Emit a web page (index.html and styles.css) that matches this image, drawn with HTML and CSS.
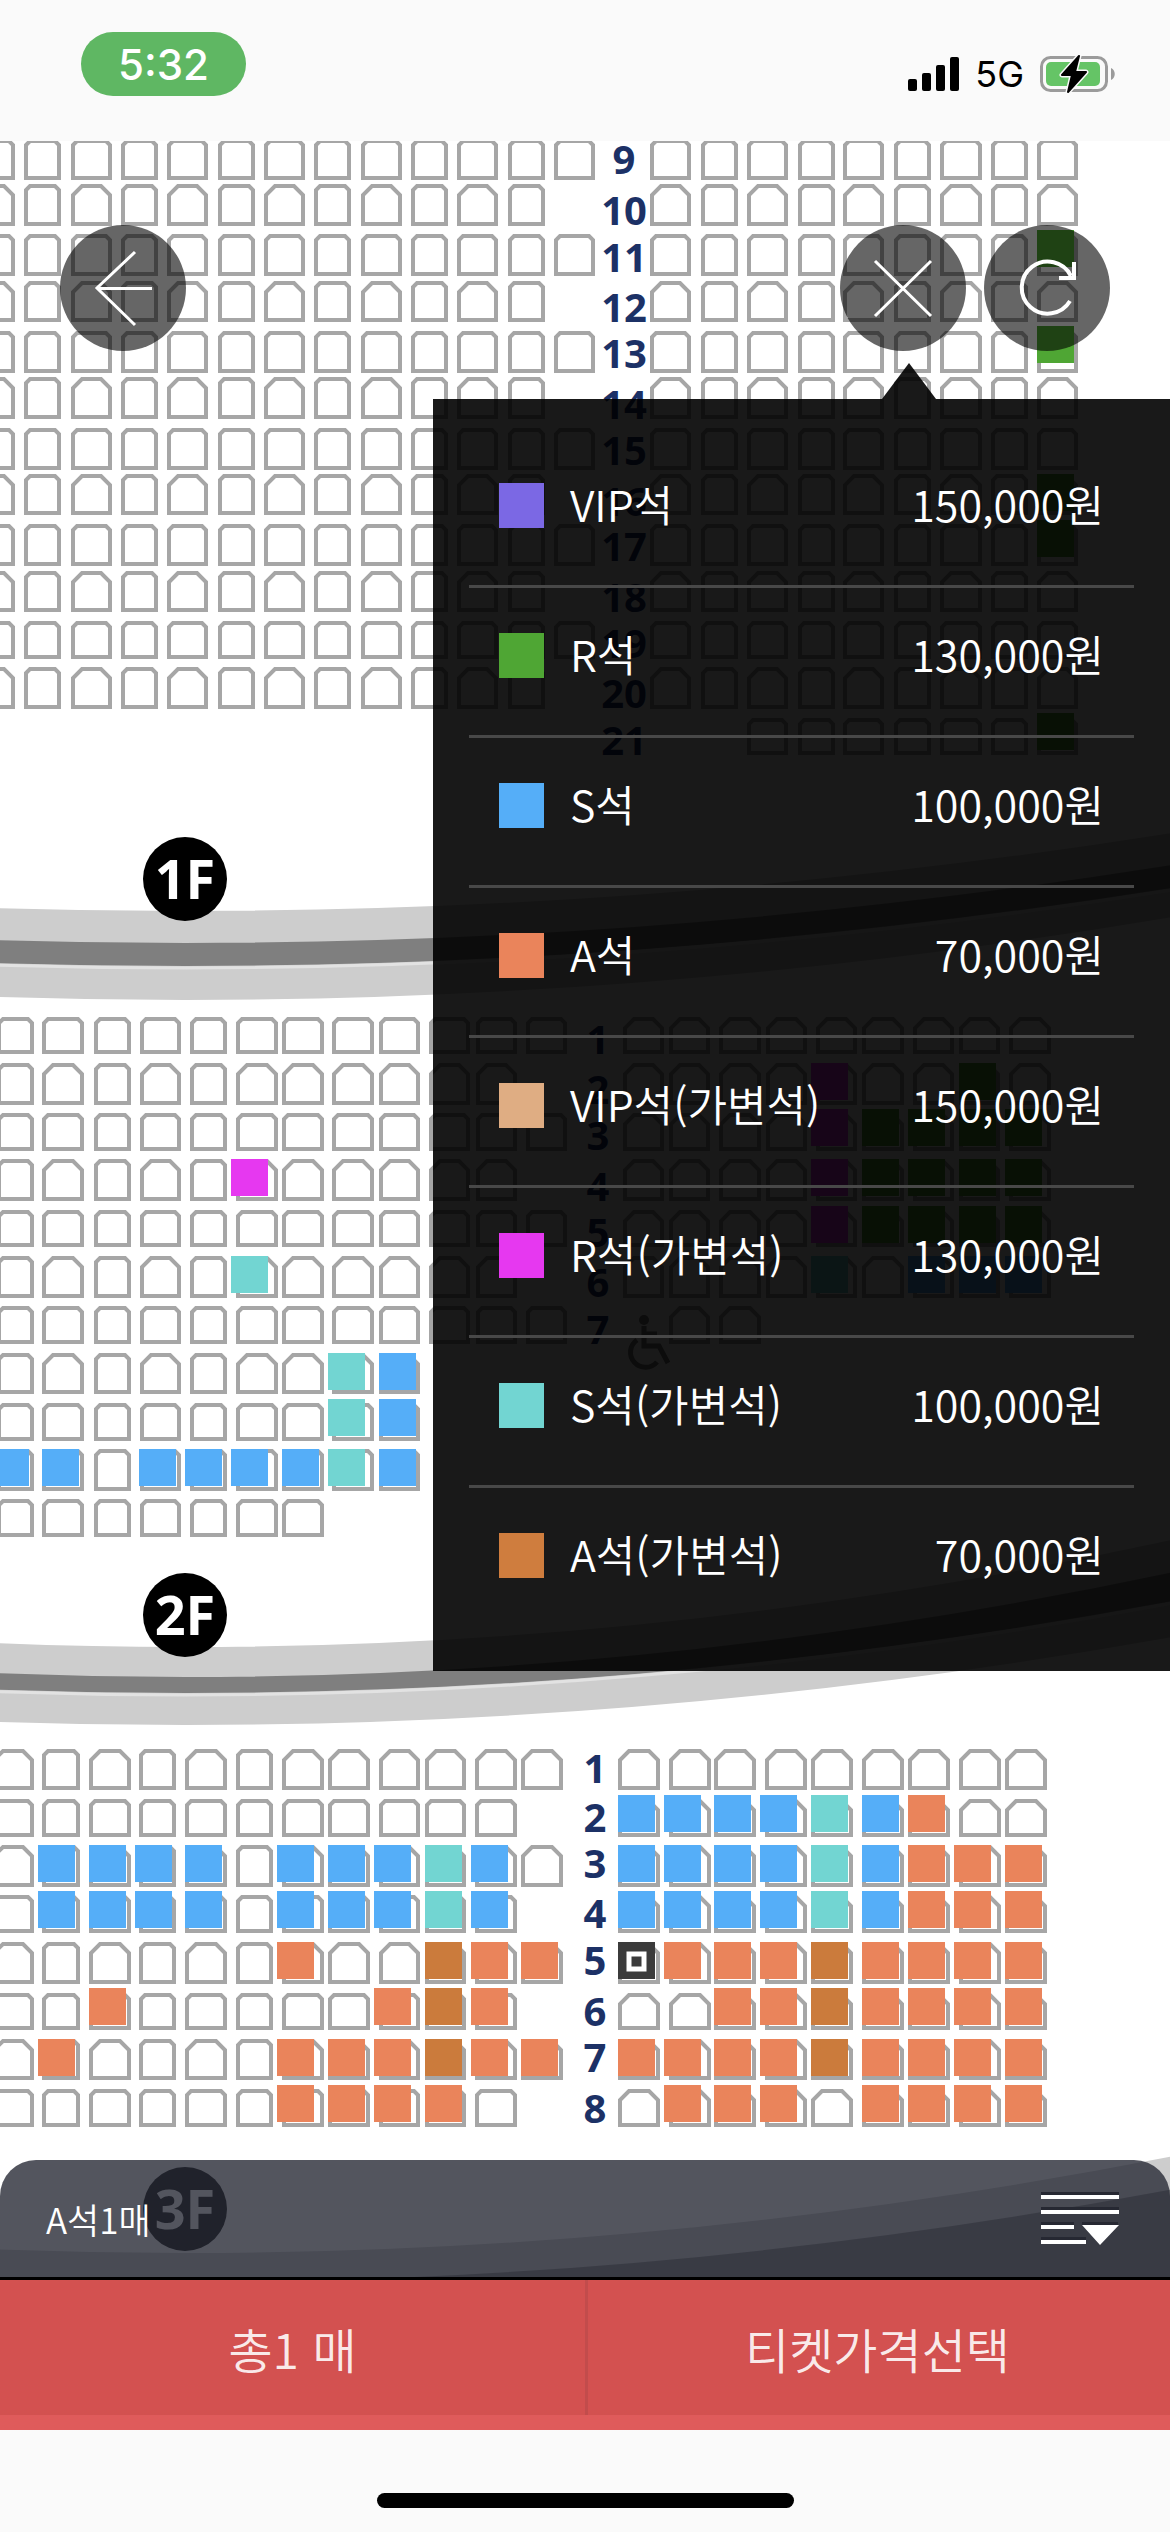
FILE: index.html
```html
<!DOCTYPE html>
<html lang="ko">
<head>
<meta charset="utf-8">
<meta name="viewport" content="width=device-width, initial-scale=1">
<title>좌석 선택</title>
<link rel="stylesheet" href="styles.css">
</head>
<body>
<header class="status">
  <span class="status-time">5:32</span>
  <div class="status-right">
    <svg class="signal" viewBox="0 0 51 34" aria-hidden="true">
      <rect x="0" y="22" width="9" height="12" rx="2"/>
      <rect x="14" y="16" width="9" height="18" rx="2"/>
      <rect x="28" y="8" width="9" height="26" rx="2"/>
      <rect x="42" y="0" width="9" height="34" rx="2"/>
    </svg>
    <span class="network">5G</span>
    <svg class="battery" viewBox="0 0 76 38" aria-hidden="true">
      <rect x="1.5" y="2.5" width="65" height="33" rx="9" fill="none" stroke="#9b9b9b" stroke-width="3"/>
      <rect x="6" y="7" width="54" height="24" rx="5" fill="#65c466"/>
      <path d="M71 13c5 2 5 10 0 12z" fill="#9b9b9b"/>
      <path d="M39 1 22 20h10l-4 17 18-20H35z" fill="#000" stroke="#fafafa" stroke-width="5" stroke-linejoin="round"/>
      <path d="M39 1 22 20h10l-4 17 18-20H35z" fill="#000" stroke="#000" stroke-width="2" stroke-linejoin="round"/>
    </svg>
  </div>
</header>

<main class="map">
  <svg class="map-canvas" viewBox="0 141 1170 2136" role="img" aria-label="좌석 배치도">
    <g class="band">
      <path d="M-915 814Q185 1008 1285 814V897Q185 1103-915 897z"/>
      <path class="band-dark" d="M-915 846Q185 1040 1285 846V869Q185 1063-915 869z"/>
      <path class="band-line" d="M-915 871Q185 1065 1285 871"/>
      <path d="M-915 1514Q185 1780 1285 1514V1616Q185 1834-915 1616z"/>
      <path class="band-dark" d="M-915 1547Q185 1807 1285 1547V1579Q185 1807-915 1579z"/>
      <path class="band-line" d="M-915 1581Q185 1809 1285 1581"/>
      <path d="M-915 2133Q185 2373 1285 2133V2400H-915z"/>
      <path class="band-dark" d="M-915 2167Q185 2397 1285 2167V2400H-915z"/>
    </g>
    <g id="seats"></g>
    <g id="row-numbers" class="row-number"></g>
    <g class="floor">
      <circle cx="185" cy="879" r="42"/><text x="185" y="899">1F</text>
      <circle cx="185" cy="1615" r="42"/><text x="185" y="1635">2F</text>
      <circle cx="185" cy="2209" r="42"/><text x="185" y="2229">3F</text>
    </g>
    <g class="wheelchair">
      <circle cx="644" cy="1320" r="5"/>
      <path d="M644 1326v20h15l9 17M645 1334h12M637 1340a15 15 0 1 0 20 22"/>
    </g>
  </svg>

  <nav class="tools">
    <button class="round back" type="button" aria-label="뒤로">
      <svg viewBox="0 0 126 126"><path class="thin" d="M75 27 37 63l38 37M37 63.5h55"/></svg>
    </button>
    <button class="round" type="button" aria-label="닫기">
      <svg viewBox="0 0 126 126"><path class="thin" d="M35 36 91 91M91 36 35 91"/></svg>
    </button>
    <button class="round" type="button" aria-label="새로고침">
      <svg viewBox="0 0 126 126"><path class="thick" d="M86 76A26 26 0 1 1 87 51M90 37v16H75"/></svg>
    </button>
  </nav>

  <section class="legend" aria-label="좌석 등급별 가격">
    <ul class="legend-list">
      <li class="grade"><span class="swatch vip"></span><span class="name">VIP석</span><span class="price">150,000원</span></li>
      <li class="grade"><span class="swatch r"></span><span class="name">R석</span><span class="price">130,000원</span></li>
      <li class="grade"><span class="swatch s"></span><span class="name">S석</span><span class="price">100,000원</span></li>
      <li class="grade"><span class="swatch a"></span><span class="name">A석</span><span class="price">70,000원</span></li>
      <li class="grade"><span class="swatch vip-flex"></span><span class="name">VIP석(가변석)</span><span class="price">150,000원</span></li>
      <li class="grade"><span class="swatch r-flex"></span><span class="name">R석(가변석)</span><span class="price">130,000원</span></li>
      <li class="grade"><span class="swatch s-flex"></span><span class="name">S석(가변석)</span><span class="price">100,000원</span></li>
      <li class="grade"><span class="swatch a-flex"></span><span class="name">A석(가변석)</span><span class="price">70,000원</span></li>
    </ul>
  </section>

  <section class="summary">
    <span class="summary-text">A석1매</span>
    <button class="list-button" type="button" aria-label="선택 좌석 목록">
      <svg viewBox="0 0 79 54">
        <path class="shade" d="M0 0h78v3H0zM0 15h78v3H0zM0 30h33v3H0zM0 45h45v3H0zM41 30h36v3H41z"/>
        <path d="M0 3h78v4H0zM0 18h78v4H0zM0 33h33v4H0zM0 48h45v4H0zM41 33h37L59 53z"/>
      </svg>
    </button>
  </section>
</main>

<footer class="actions">
  <button class="action" type="button">총1 매</button>
  <button class="action" type="button">티켓가격선택</button>
</footer>
<div class="home"><span class="home-bar"></span></div>
<script src="seats.js"></script>
</body>
</html>
```
FILE: styles.css
```css
* { box-sizing: border-box; }

body {
  margin: 0;
  min-height: 100vh;
  display: flex;
  flex-direction: column;
  background: #fafafa;
  font-family: "Noto Sans CJK KR", sans-serif;
}

button {
  border: 0;
  padding: 0;
  background: none;
  font: inherit;
  color: inherit;
  cursor: pointer;
}

svg { display: block; }

/* status bar */
.status {
  height: 141px;
  padding: 32px 54px 0 81px;
  display: flex;
  justify-content: space-between;
  align-items: flex-start;
  font-family: Inter, sans-serif;
}

.status-time {
  width: 165px;
  height: 64px;
  border-radius: 32px;
  background: #5fb763;
  color: #fff;
  font-size: 42px;
  font-weight: 500;
  line-height: 66px;
  text-align: center;
}

.status-right {
  display: flex;
  align-items: center;
  gap: 16px;
  padding-top: 23px;
}

.signal { width: 51px; height: 34px; }
.network { font-size: 36px; line-height: 38px; }
.battery { width: 76px; height: 38px; }

/* seat map */
.map {
  position: relative;
  flex: 1;
  overflow: hidden;
  background: #fff;
}

.map-canvas { width: 100%; height: auto; }

.band { fill: #cdcdcd; }
.band-dark { fill: #7f7f7f; }
.band-line { fill: none; stroke: #e2e2e2; stroke-width: 3; }

.seat { fill: #fff; stroke: #a6a6a6; stroke-width: 4; }
.seat-r { fill: #4fa634; }
.seat-s { fill: #55aef8; }
.seat-a { fill: #ea845b; }
.seat-r-flex { fill: #e638f0; }
.seat-s-flex { fill: #72d5d2; }
.seat-a-flex { fill: #cb7b3c; }
.seat-picked { fill: #3b3b3b; }
.seat-ring { fill: #3b3b3b; stroke: #fff; stroke-width: 5; }

.row-number {
  font: 700 40px "Open Sans", sans-serif;
  fill: #1c3166;
  text-anchor: middle;
}

.floor text {
  font: 700 54px "Open Sans", sans-serif;
  fill: #fff;
  text-anchor: middle;
}

.wheelchair path { fill: none; stroke: #777; stroke-width: 5; }
.wheelchair circle { fill: #777; }

/* floating buttons */
.tools {
  position: absolute;
  top: 84px;
  left: 60px;
  right: 60px;
  display: flex;
  gap: 18px;
}

.round {
  width: 126px;
  height: 126px;
  border-radius: 50%;
  background: rgba(0, 0, 0, .6);
}

.back { margin-right: auto; }
.round path { fill: none; stroke: #fff; }
.thin { stroke-width: 3px; }
.thick { stroke-width: 4px; }

/* price legend */
.legend {
  position: absolute;
  top: 258px;
  right: 0;
  width: 63%;
  padding: 39px 36px 33px;
  background: rgba(0, 0, 0, .9);
}

.legend::before {
  content: "";
  position: absolute;
  right: 234px;
  bottom: 100%;
  border: 27px solid transparent;
  border-top: 0;
  border-bottom: 36px solid rgba(0, 0, 0, .9);
}

.legend-list { margin: 0; padding: 0; list-style: none; }

.grade {
  height: 150px;
  padding: 0 30px 12px;
  display: flex;
  align-items: center;
  border-bottom: 3px solid #484848;
  color: #fff;
  font-size: 43px;
  font-weight: 350;
  line-height: 60px;
}

.grade:last-child { border-color: transparent; }
.swatch { width: 45px; height: 45px; margin-right: 26px; }
.name, .price { padding-bottom: 6px; }
.price { margin-left: auto; }
.vip { background: #7b68e4; }
.r { background: #4fa634; }
.s { background: #55aef8; }
.a { background: #ea845b; }
.vip-flex { background: #dfad83; }
.r-flex { background: #e638f0; }
.s-flex { background: #72d5d2; }
.a-flex { background: #cf7d3e; }

/* selection summary */
.summary {
  position: absolute;
  left: 0;
  right: 0;
  bottom: 0;
  height: 117px;
  padding: 0 50px 0 46px;
  display: flex;
  align-items: center;
  justify-content: space-between;
  border-radius: 36px 36px 0 0;
  background: rgba(40, 43, 54, .8);
  color: #fff;
  font-size: 35px;
  font-weight: 350;
}

.list-button svg { width: 79px; height: 54px; fill: #fff; }
.list-button .shade { fill: #262832; }

/* bottom actions */
.actions {
  display: grid;
  grid-template-columns: 1fr 1fr;
  border-top: 3px solid #000;
}

.action {
  height: 150px;
  border-bottom: 15px solid #df5b5b;
  background: #d35150;
  color: rgba(255, 255, 255, .9);
  font-size: 48px;
  font-weight: 350;
}

.action + .action { box-shadow: inset 3px 0 #c24c4c; }

.home {
  height: 102px;
  padding-top: 63px;
}

.home-bar {
  display: block;
  width: 417px;
  height: 15px;
  margin: 0 auto;
  border-radius: 8px;
  background: #000;
}
```
FILE: seats.js
```js
const NS = "http://www.w3.org/2000/svg";
const seats = document.getElementById("seats");
const numbers = document.getElementById("row-numbers");

const GRADES = { R: "seat-r", B: "seat-s", O: "seat-a", M: "seat-r-flex", T: "seat-s-flex", W: "seat-a-flex", X: "seat-picked" };

// Columns are [left, right, left edge of the coloured tile].
const hallLeft = [[-26,15],[24,61],[71,112],[121,158],[167,208],[218,255],[264,305],[314,351],[361,402],[411,448],[457,498],[508,545],[554,595]];
const hallRight = [[650,691],[701,738],[747,788],[798,835],[843,884],[894,931],[940,982],[991,1028],[1037,1078,1037]];
const midLeft = [[-3,34,-8],[42,84,42],[94,131,90],[140,181,139],[190,227,185],[236,278,231],[282,324,282],[332,374,328],[379,420,379],[429,470],[476,517],[526,567]];
const midRight = [[623,664],[669,710],[719,761],[766,807],[816,857,811],[862,904,862],[913,954,908],[959,1000,959],[1009,1051,1005]];
const lowLeft = [[-8,34],[42,80,38],[89,131,89],[139,176,135],[185,227,185],[236,273],[282,324,277],[328,370,328],[379,420,374],[425,466,425],[475,517,471],[521,563,521]];
const lowRight = [[618,660,618],[669,711,664],[714,756,714],[765,807,760],[811,853,811],[862,904,862],[908,950,908],[959,1001,954],[1005,1047,1005]];

// Rows: number, top, bottom, number baseline, tile top, seats on the left and
// on the right (. plain seat, _ no seat), corner cut on each side.
const sections = [
  { left: hallLeft, right: hallRight, x: 624, tile: 37, rows: [
    [9,139,180,174,0,".............",".........",4,4],
    [10,184,226,225,0,"............_",".........",9,9],
    [11,234,276,272,230,".............","........R",4,4],
    [12,281,322,322,0,"............_",".........",9,9],
    [13,331,373,368,326,".............","........R",4,4],
    [14,377,419,419,0,"............_",".........",9,9],
    [15,428,470,465,0,".............",".........",4,4],
    [16,474,515,516,474,"............_","........R",9,9],
    [17,524,566,561,520,".............","........R",4,4],
    [18,571,612,612,0,"............_",".........",9,9],
    [19,621,659,658,0,".............",".........",4,4],
    [20,667,709,708,0,"............_",".........",9,9],
    [21,718,755,755,713,"","__......R",4,4]
  ]},
  { left: midLeft, right: midRight, x: 598, tile: 37, rows: [
    [1,1017,1054,1054,0,"............",".........",4,9],
    [2,1063,1105,1104,1063,"..........._","....M..R.",9,9],
    [3,1113,1151,1150,1109,"............","....MRRRR",4,9],
    [4,1159,1201,1201,1159,".....M....._","....MRRRR",9,9],
    [5,1210,1247,1247,1206,"............","....MRRRR",4,9],
    [6,1256,1298,1297,1256,".....T....._","....T.BBB",9,9],
    [7,1306,1344,1344,0,"............","_..",4,9],
    ["",1353,1394,0,1353,".......TB","",9,9],
    ["",1403,1441,0,1399,".......TB","",4,4],
    ["",1449,1491,0,1449,"BB.BBBBTB","",4,4],
    ["",1499,1537,0,0,".......","",4,4]
  ]},
  { left: lowLeft, right: lowRight, x: 595, tile: 37, rows: [
    [1,1749,1790,1783,0,"............",".........",9,9],
    [2,1799,1837,1832,1795,"...........","BBBBTBO..",4,9],
    [3,1845,1887,1878,1845,".BBBB.BBBTB.","BBBBTBOOO",9,9],
    [4,1895,1933,1928,1891,".BBBB.BBBTB","BBBBTBOOO",4,9],
    [5,1942,1984,1975,1942,"......O..WOO","XOOOWOOOO",9,9],
    [6,1993,2030,2026,1988,"..O.....OWO","..OOWOOOO",4,9],
    [7,2039,2080,2072,2039,".O....OOOWOO","OOOOWOOOO",9,9],
    [8,2089,2127,2123,2085,"......OOOO.",".OOO.OOOO",4,9]
  ]}
];

function add(parent, name, attrs, text) {
  const el = document.createElementNS(NS, name);
  for (const key in attrs) el.setAttribute(key, attrs[key]);
  if (text !== undefined) el.textContent = text;
  parent.appendChild(el);
}

function drawSeat(col, top, bottom, tileTop, tile, mark, cut) {
  const l = col[0] + 2, r = col[1] - 2, t = top + 2, b = bottom - 2;
  const c = r - l > 35 ? cut : 4;
  add(seats, "path", { class: "seat", d: `M${l} ${b}V${t + c}L${l + c} ${t}H${r - c}L${r} ${t + c}V${b}z` });
  if (mark === ".") return;
  add(seats, "rect", { class: GRADES[mark], x: col[2], y: tileTop, width: tile, height: tile });
  if (mark === "X") add(seats, "rect", { class: "seat-ring", x: col[2] + 11, y: tileTop + 12, width: 15, height: 15 });
}

for (const { left, right, x, tile, rows } of sections) {
  for (const [label, top, bottom, baseline, tileTop, leftMarks, rightMarks, leftCut, rightCut] of rows) {
    [...leftMarks].forEach((m, i) => m !== "_" && drawSeat(left[i], top, bottom, tileTop, tile, m, leftCut));
    [...rightMarks].forEach((m, i) => m !== "_" && drawSeat(right[i], top, bottom, tileTop, tile, m, rightCut));
    if (label) add(numbers, "text", { x, y: baseline }, label);
  }
}
```
